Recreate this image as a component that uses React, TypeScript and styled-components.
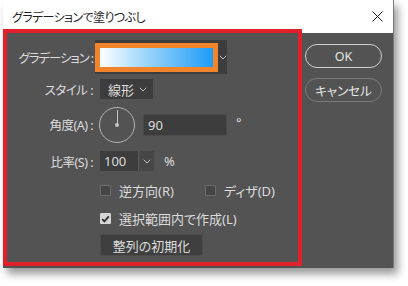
import styled, { createGlobalStyle } from "styled-components";

const GlobalStyle = createGlobalStyle`
  html, body {
    margin: 0;
    padding: 0;
    background: #ffffff;
  }
  body {
    font-family: "Noto Sans", "Noto Sans CJK JP", sans-serif;
    font-feature-settings: "palt";
  }
`;

const textColor = "#dcdcdc";
const bodyGray = "#535353";
const fieldGray = "#3d3d3d";

const Page = styled.div`
  width: 408px;
  height: 286px;
  padding-left: 3px;
  box-sizing: border-box;
`;

const Dialog = styled.div`
  width: 390px;
  display: flex;
  flex-direction: column;
  box-shadow: 4px 6px 8px rgba(0, 0, 0, 0.4);
  border-right: 1px solid #7a7a7a;
`;

const TitleBar = styled.div`
  height: 33px;
  background: #ffffff;
  display: flex;
  align-items: center;
  justify-content: space-between;
  padding: 0 9px 0 9px;
  box-sizing: border-box;
`;

const Title = styled.span`
  font-family: "Noto Sans CJK JP", sans-serif;
  font-size: 12px;
  letter-spacing: -0.6px;
  color: #1e1e1e;
  margin-top: -1px;
`;

const CloseButton = styled.div`
  width: 14px;
  height: 14px;
  display: flex;
  align-items: center;
  justify-content: center;
  margin-top: -1px;
`;

const Body = styled.div`
  height: 235px;
  background: ${bodyGray};
  display: flex;
  align-items: flex-start;
`;

const Panel = styled.div`
  width: 299px;
  height: 237px;
  margin-top: -4px;
  border: 4px solid #e2202c;
  box-sizing: border-box;
  padding-top: 7px;
  display: flex;
  flex-direction: column;
`;

const Row = styled.div<{ $h: number; $mt?: number }>`
  display: grid;
  grid-template-columns: 86px 1fr;
  column-gap: 3px;
  align-items: center;
  height: ${(p) => p.$h}px;
  margin-top: ${(p) => p.$mt ?? 0}px;
`;

const Label = styled.span<{ $tight?: boolean }>`
  font-family: "Noto Sans", "Noto Sans CJK JP", sans-serif;
  font-size: 12.5px;
  color: ${textColor};
  text-align: right;
  white-space: nowrap;
  letter-spacing: ${(p) => (p.$tight ? -1.1 : -0.5)}px;
`;

const Controls = styled.div`
  display: flex;
  align-items: center;
`;

const GradientField = styled.div`
  display: flex;
  align-items: center;
  height: 34px;
  width: 132px;
  margin-left: -1px;
  background: ${fieldGray};
`;

const Swatch = styled.div`
  width: 123px;
  height: 29px;
  box-sizing: border-box;
  border: 5px solid #f2852c;
  background: linear-gradient(90deg, #ffffff 0%, #a8dbfc 35%, #1e9cf6 100%);
`;

const ChevronSlot = styled.div`
  flex: 1;
  display: flex;
  align-items: center;
  justify-content: center;
`;

const Select = styled.div<{ $w: number }>`
  display: flex;
  align-items: center;
  justify-content: space-between;
  width: ${(p) => p.$w}px;
  height: 20px;
  box-sizing: border-box;
  padding: 0 6px 0 8px;
  background: ${fieldGray};
  margin-left: 4px;
  font-family: "Noto Sans CJK JP", sans-serif;
  font-size: 13px;
  color: ${textColor};
`;

const Dial = styled.div`
  width: 36px;
  height: 36px;
  margin-left: 3px;
  border: 1px solid #b4b4b4;
  border-radius: 50%;
  box-sizing: border-box;
  position: relative;
`;

const DialHand = styled.div`
  position: absolute;
  left: 16.5px;
  top: 2px;
  width: 1px;
  height: 15px;
  background: #c4c4c4;
`;

const DialDot = styled.div`
  position: absolute;
  left: 15px;
  top: 15px;
  width: 4px;
  height: 4px;
  border-radius: 50%;
  background: #c4c4c4;
`;

const NumberInput = styled.div<{ $w: number; $ml: number }>`
  width: ${(p) => p.$w}px;
  height: 22px;
  margin-left: ${(p) => p.$ml}px;
  background: ${fieldGray};
  border: 1px solid #4a4a4a;
  box-sizing: border-box;
  display: flex;
  align-items: center;
  padding-left: 4px;
  font-family: "Noto Sans", sans-serif;
  font-size: 13px;
  color: ${textColor};
`;

const Combo = styled.div`
  display: flex;
  align-items: stretch;
  height: 20px;
  margin-left: 4px;
  background: ${fieldGray};
`;

const ComboValue = styled.div`
  width: 38px;
  display: flex;
  align-items: center;
  padding-left: 4px;
  box-sizing: border-box;
  font-family: "Noto Sans", sans-serif;
  font-size: 13px;
  color: ${textColor};
`;

const ComboArrow = styled.div`
  width: 15px;
  display: flex;
  align-items: center;
  justify-content: center;
  background: #474747;
  border-left: 1px solid #5c5c5c;
`;

const Unit = styled.span<{ $ml: number; $raise?: boolean }>`
  margin-left: ${(p) => p.$ml}px;
  font-family: "Noto Sans", sans-serif;
  font-size: 13px;
  color: ${textColor};
  position: relative;
  top: ${(p) => (p.$raise ? -3 : 0)}px;
`;

const CheckItem = styled.label<{ $ml?: number }>`
  display: flex;
  align-items: center;
  gap: 8px;
  margin-left: ${(p) => p.$ml ?? 4}px;
  font-family: "Noto Sans", "Noto Sans CJK JP", sans-serif;
  font-size: 13px;
  color: ${textColor};
  white-space: nowrap;
`;

const Box = styled.span<{ $checked?: boolean }>`
  width: 11px;
  height: 11px;
  box-sizing: border-box;
  border: 1px solid ${(p) => (p.$checked ? "#d6d6d6" : "#6c6c6c")};
  background: ${(p) => (p.$checked ? "#d6d6d6" : "#454545")};
  border-radius: 1px;
  display: flex;
  align-items: center;
  justify-content: center;
`;

const ResetButton = styled.div`
  margin-left: 4px;
  width: 103px;
  height: 22px;
  background: #3f3f3f;
  border: 1px solid #4c4c4c;
  box-sizing: border-box;
  display: flex;
  align-items: center;
  justify-content: center;
  font-family: "Noto Sans CJK JP", sans-serif;
  font-size: 13px;
  color: ${textColor};
`;

const ButtonColumn = styled.div`
  display: flex;
  flex-direction: column;
  gap: 10px;
  margin-left: 3px;
  margin-top: 11px;
`;

const PillButton = styled.div<{ $primary?: boolean }>`
  width: 77px;
  height: 24px;
  box-sizing: border-box;
  border-radius: 12px;
  border: ${(p) => (p.$primary ? "1.5px solid #d0d0d0" : "1px solid #7a7a7a")};
  display: flex;
  align-items: center;
  justify-content: center;
  font-family: "Noto Sans", "Noto Sans CJK JP", sans-serif;
  font-size: 12.5px;
  color: #e6e6e6;
`;

const Chevron = () => (
  <svg width="8" height="5" viewBox="0 0 8 5">
    <path d="M0.8 0.8 L4 4 L7.2 0.8" fill="none" stroke="#bdbdbd" strokeWidth="1" />
  </svg>
);

const Check = () => (
  <svg width="9" height="8" viewBox="0 0 9 8">
    <path d="M1.2 4.2 L3.4 6.4 L7.8 1.4" fill="none" stroke="#2e2e2e" strokeWidth="1.8" />
  </svg>
);

export default function App() {
  return (
    <Page>
      <GlobalStyle />
      <Dialog>
        <TitleBar>
          <Title>グラデーションで塗りつぶし</Title>
          <CloseButton>
            <svg width="11" height="11" viewBox="0 0 11 11">
              <path d="M0.5 0.5 L10.5 10.5 M10.5 0.5 L0.5 10.5" stroke="#222" strokeWidth="1" />
            </svg>
          </CloseButton>
        </TitleBar>
        <Body>
          <Panel>
            <Row $h={34}>
              <Label $tight>グラデーション :</Label>
              <Controls>
                <GradientField>
                  <Swatch />
                  <ChevronSlot>
                    <Chevron />
                  </ChevronSlot>
                </GradientField>
              </Controls>
            </Row>
            <Row $h={20} $mt={5}>
              <Label>スタイル :</Label>
              <Controls>
                <Select $w={53}>
                  線形
                  <Chevron />
                </Select>
              </Controls>
            </Row>
            <Row $h={37} $mt={7}>
              <Label>角度(A) :</Label>
              <Controls>
                <Dial>
                  <DialHand />
                  <DialDot />
                </Dial>
                <NumberInput $w={84} $ml={8}>
                  90
                </NumberInput>
                <Unit $ml={9} $raise>
                  °
                </Unit>
              </Controls>
            </Row>
            <Row $h={20} $mt={8}>
              <Label>比率(S) :</Label>
              <Controls>
                <Combo>
                  <ComboValue>100</ComboValue>
                  <ComboArrow>
                    <Chevron />
                  </ComboArrow>
                </Combo>
                <Unit $ml={10}>%</Unit>
              </Controls>
            </Row>
            <Row $h={14} $mt={10}>
              <span />
              <Controls>
                <CheckItem>
                  <Box />
                  逆方向(R)
                </CheckItem>
                <CheckItem $ml={31}>
                  <Box />
                  ディザ(D)
                </CheckItem>
              </Controls>
            </Row>
            <Row $h={14} $mt={14}>
              <span />
              <Controls>
                <CheckItem>
                  <Box $checked>
                    <Check />
                  </Box>
                  選択範囲内で作成(L)
                </CheckItem>
              </Controls>
            </Row>
            <Row $h={22} $mt={11}>
              <span />
              <Controls>
                <ResetButton>整列の初期化</ResetButton>
              </Controls>
            </Row>
          </Panel>
          <ButtonColumn>
            <PillButton $primary>OK</PillButton>
            <PillButton>キャンセル</PillButton>
          </ButtonColumn>
        </Body>
      </Dialog>
    </Page>
  );
}
